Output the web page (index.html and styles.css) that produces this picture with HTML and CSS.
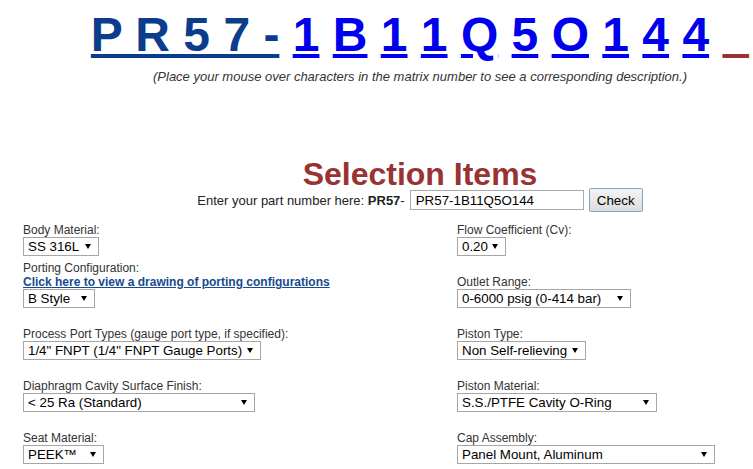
FILE: index.html
```html
<!DOCTYPE html>
<html>
<head>
    <title>PR57 Part Number Configurator</title>
    <link rel="stylesheet" href="styles.css">
</head>
<body>
    <div class="page">
        <div class="top">
            <!-- Matrix number, one link per character -->
            <div class="matrix">
                <a href="#" class="matrix-base">P R 5 7 -</a>
                <a href="#" class="matrix-char">1</a>
                <a href="#" class="matrix-char">B</a>
                <a href="#" class="matrix-char">1</a>
                <a href="#" class="matrix-char">1</a>
                <a href="#" class="matrix-char">Q</a>
                <a href="#" class="matrix-char">5</a>
                <a href="#" class="matrix-char">O</a>
                <a href="#" class="matrix-char">1</a>
                <a href="#" class="matrix-char">4</a>
                <a href="#" class="matrix-char">4</a>
                <a href="#" class="matrix-blank">&nbsp;&nbsp;</a>
            </div>
            <p class="hint">(Place your mouse over characters in the matrix number to see a corresponding description.)</p>

            <h1>Selection Items</h1>
            <form class="part-row" onsubmit="return false;">
                <span>Enter your part number here: <b>PR57</b>-</span>
                <input type="text" class="part-input" value="PR57-1B11Q5O144">
                <button type="submit" class="check-btn">Check</button>
            </form>
        </div>

        <div class="options">
            <div class="field">
                <label>Body Material:</label>
                <span class="select-wrap"><select class="w-76"><option>SS 316L</option></select></span>
            </div>
            <div class="field">
                <label>Flow Coefficient (Cv):</label>
                <span class="select-wrap"><select class="w-49"><option>0.20</option></select></span>
            </div>

            <div class="field">
                <label>Porting Configuration:</label>
                <a href="#" class="drawing-link">Click here to view a drawing of porting configurations</a>
                <span class="select-wrap"><select class="w-72"><option>B Style</option></select></span>
            </div>
            <div class="field">
                <label>Outlet Range:</label>
                <span class="select-wrap"><select class="w-174"><option>0-6000 psig (0-414 bar)</option></select></span>
            </div>

            <div class="field">
                <label>Process Port Types (gauge port type, if specified):</label>
                <span class="select-wrap"><select class="w-238"><option>1/4" FNPT (1/4" FNPT Gauge Ports)</option></select></span>
            </div>
            <div class="field">
                <label>Piston Type:</label>
                <span class="select-wrap"><select class="w-129"><option>Non Self-relieving</option></select></span>
            </div>

            <div class="field">
                <label>Diaphragm Cavity Surface Finish:</label>
                <span class="select-wrap"><select class="w-232"><option>&lt; 25 Ra (Standard)</option></select></span>
            </div>
            <div class="field">
                <label>Piston Material:</label>
                <span class="select-wrap"><select class="w-200"><option>S.S./PTFE Cavity O-Ring</option></select></span>
            </div>

            <div class="field">
                <label>Seat Material:</label>
                <span class="select-wrap"><select class="w-81"><option>PEEK™</option></select></span>
            </div>
            <div class="field">
                <label>Cap Assembly:</label>
                <span class="select-wrap"><select class="w-258"><option>Panel Mount, Aluminum</option></select></span>
            </div>
        </div>
    </div>
</body>
</html>
```

FILE: styles.css
```css
html, body {
    margin: 0;
    padding: 0;
    overflow: hidden;
    background-color: #fff;
}

body {
    font-family: "Liberation Sans", Arial, sans-serif;
    color: #222;
}

.top {
    padding-left: 87px;
}

.matrix {
    padding-top: 7px;
    text-align: center;
    font-size: 48px;
    font-weight: bold;
    line-height: 55px;
    white-space: nowrap;
}

.matrix a {
    text-decoration: underline;
}

.matrix-base {
    color: #0c3c8c;
}

.matrix-char {
    color: #0000ee;
}

.matrix-blank {
    color: #993333;
}

.hint {
    margin: 7px 0 0 0;
    text-align: center;
    font-size: 13px;
    font-style: italic;
    line-height: 15px;
    color: #333;
}

h1 {
    margin: 77px 0 0 0;
    text-align: center;
    font-size: 32px;
    line-height: 27px;
    color: #993333;
}

.part-row {
    display: flex;
    justify-content: center;
    align-items: center;
    gap: 5px;
    height: 24px;
    margin: 0;
    font-size: 13px;
    color: #222;
}

.part-input {
    width: 174px;
    height: 20px;
    box-sizing: border-box;
    padding: 0 5px;
    border: 1px solid #a9a9a9;
    font-family: inherit;
    font-size: 13.33px;
    color: #000;
}

.check-btn {
    width: 54px;
    height: 24px;
    box-sizing: border-box;
    padding: 0;
    border: 1px solid #7ea4d9;
    border-radius: 2px;
    background: linear-gradient(#f4f4f4, #dcdcdc);
    font-family: inherit;
    font-size: 13.33px;
    color: #000;
}

.options {
    display: grid;
    grid-template-columns: 434px 1fr;
    grid-template-rows: 48px repeat(4, 52px);
    padding-left: 23px;
}

.field {
    display: flex;
    flex-direction: column;
    justify-content: flex-end;
    align-items: flex-start;
    padding-bottom: 4px;
}

.field label {
    font-size: 12px;
    line-height: 14px;
    color: #333;
}

.drawing-link {
    font-size: 12px;
    line-height: 14px;
    font-weight: bold;
    color: #174a8f;
}

.select-wrap {
    position: relative;
    display: inline-block;
    height: 19px;
}

.select-wrap::after {
    content: "";
    position: absolute;
    right: 8px;
    top: 7px;
    border-left: 3px solid transparent;
    border-right: 3px solid transparent;
    border-top: 5px solid #000;
    pointer-events: none;
}

select {
    -webkit-appearance: none;
    appearance: none;
    height: 19px;
    box-sizing: border-box;
    margin: 0;
    padding: 0 0 0 4px;
    border: 1px solid #a6a6a6;
    border-radius: 0;
    background-color: #fff;
    font-family: "Liberation Sans", Arial, sans-serif;
    font-size: 13.33px;
    color: #000;
}

.w-49 { width: 49px; }
.w-72 { width: 72px; }
.w-76 { width: 76px; }
.w-81 { width: 81px; }
.w-129 { width: 129px; }
.w-174 { width: 174px; }
.w-200 { width: 200px; }
.w-232 { width: 232px; }
.w-238 { width: 238px; }
.w-258 { width: 258px; }
```
